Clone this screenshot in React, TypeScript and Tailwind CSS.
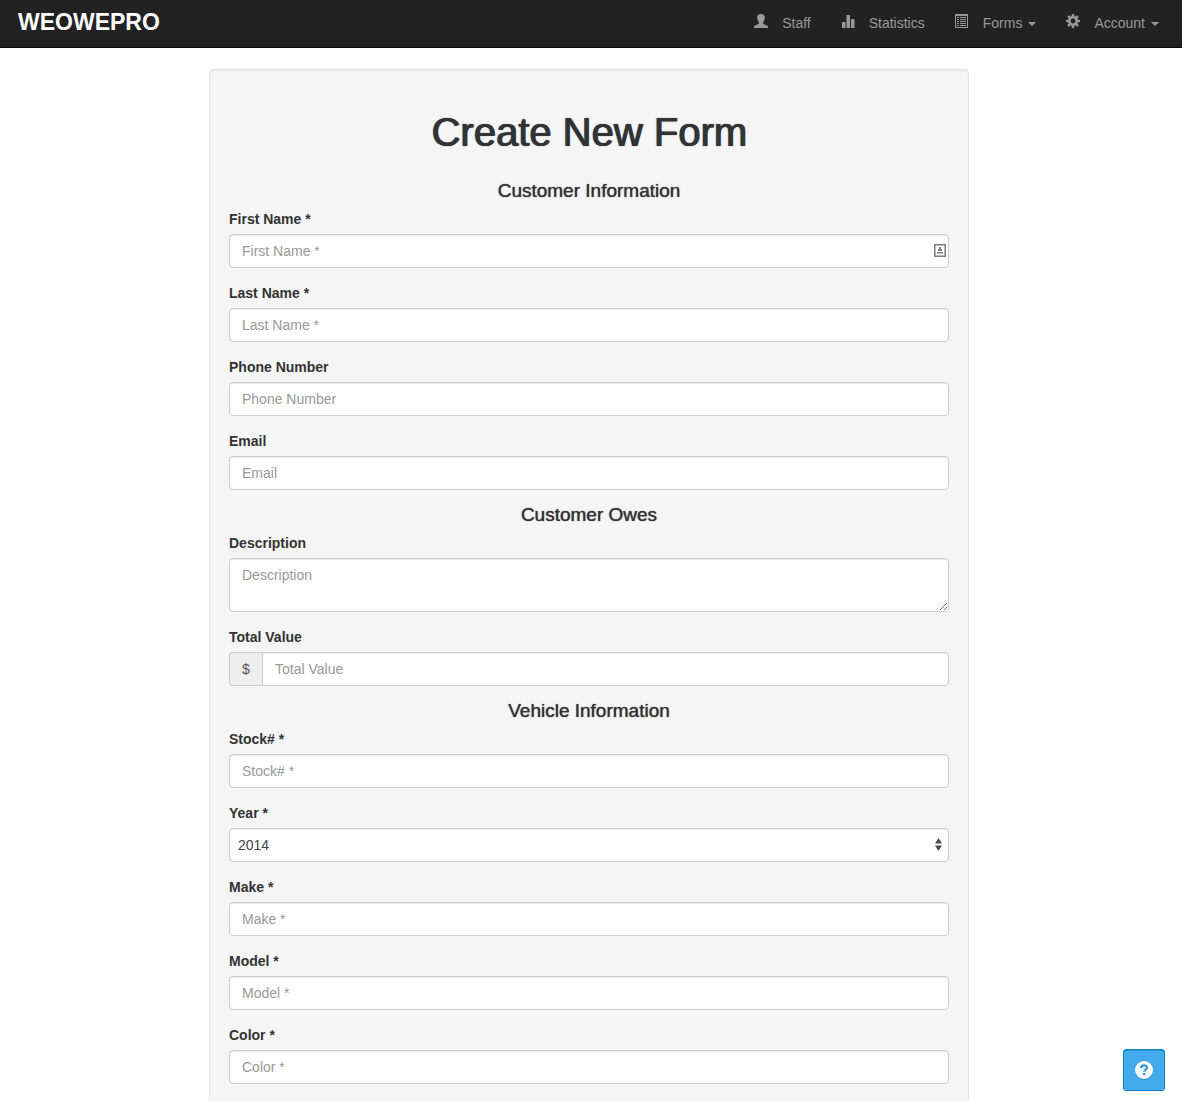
import { useId } from "react";
import type { ReactNode } from "react";

const control =
  "block w-full rounded border border-[#cccccc] bg-white px-3 text-sm leading-5 text-[#555555] shadow-[inset_0_1px_1px_rgba(0,0,0,0.075)] outline-none placeholder:text-[#999999] placeholder:opacity-100 focus:border-[#66afe9]";

function UserIcon() {
  return (
    <svg viewBox="0 0 14 14" className="size-3.5" fill="currentColor" aria-hidden="true">
      <path d="M7 0C4.500 0 3.200 1.400 3.200 3.500c0 .8.200 1 .1 1.500-.1.500.1 1.100.5 1.300.2.900.6 1.600 1.100 2.100v1.200c-.2.500-.8.700-1.500 1C1.700 11.200.3 11.800 0 12.600V14h14v-1.400c-.3-.8-1.700-1.400-3.400-2-.7-.3-1.300-.5-1.500-1V8.400c.5-.5.9-1.200 1.100-2.100.4-.2.600-.8.5-1.300-.1-.5.100-.7.100-1.500C10.800 1.400 9.500 0 7 0z" />
    </svg>
  );
}

function StatsIcon() {
  return (
    <svg viewBox="0 0 14 14" className="size-3.5" fill="currentColor" aria-hidden="true">
      <rect x="1" y="8" width="3.500" height="6" rx=".5" />
      <rect x="5.500" y="1" width="3.500" height="13" rx=".5" />
      <rect x="10" y="5" width="3.500" height="9" rx=".5" />
    </svg>
  );
}

function ListIcon() {
  return (
    <svg viewBox="0 0 14 14" className="size-3.5" aria-hidden="true">
      <path fill="currentColor" fillRule="evenodd" d="M0 0h13v14H0zM1 2v11h11V2z" />
      <path fill="currentColor" d="M2 3h2v1H2zM5 3h6v1H5zM2 5h2v1H2zM5 5h6v1H5zM2 7h2v1H2zM5 7h6v1H5zM2 9h2v1H2zM5 9h6v1H5zM2 11h2v1H2zM5 11h6v1H5z" />
    </svg>
  );
}

function GearIcon() {
  return (
    <svg viewBox="0 0 14 14" className="size-3.5" aria-hidden="true">
      <g fill="currentColor">
        <rect x="5.700" y="0" width="2.600" height="14" rx=".5" />
        <rect x="5.700" y="0" width="2.600" height="14" rx=".5" transform="rotate(45 7 7)" />
        <rect x="5.700" y="0" width="2.600" height="14" rx=".5" transform="rotate(90 7 7)" />
        <rect x="5.700" y="0" width="2.600" height="14" rx=".5" transform="rotate(135 7 7)" />
        <circle cx="7" cy="7" r="5" />
      </g>
      <circle cx="7" cy="7" r="2.400" fill="#222222" />
    </svg>
  );
}

function Caret() {
  return (
    <svg viewBox="0 0 8 4" className="mt-px ml-1.5 h-1 w-2" fill="currentColor" aria-hidden="true">
      <path d="M0 0h8L4 4z" />
    </svg>
  );
}

const navItem = "flex items-center text-sm leading-5 text-[#999999] hover:text-white";

function NavLabel({ icon, children }: { icon: ReactNode; children: ReactNode }) {
  return (
    <>
      <span className="mr-3.5 pb-1">{icon}</span>
      {children}
    </>
  );
}

function SectionTitle({ children }: { children: ReactNode }) {
  return (
    <h2 className="mb-2 text-center text-[19px] leading-5 text-[#333333] [text-shadow:0_0_1px_#333333]">
      {children}
    </h2>
  );
}

function Field({ label, children }: { label: string; children: (id: string) => ReactNode }) {
  const id = useId();
  return (
    <div className="mb-[15px] last:mb-0">
      <label htmlFor={id} className="mb-[5px] block w-fit text-sm leading-5 font-bold text-[#333333]">
        {label}
      </label>
      {children(id)}
    </div>
  );
}

function TextField({ label, type = "text" }: { label: string; type?: string }) {
  return (
    <Field label={label}>
      {(id) => <input id={id} type={type} placeholder={label} className={`${control} h-[34px]`} />}
    </Field>
  );
}

export default function App() {
  return (
    <div className="flex min-h-screen flex-col bg-white font-['Liberation_Sans',Arial,sans-serif]">
      <header className="flex h-12 items-center justify-between border-b border-[#080808] bg-[#222222] pr-[23px] pl-[18px]">
        <a href="#" className="pb-1 text-[23px] leading-6 font-bold text-white">
          WEOWEPRO
        </a>
        <nav className="flex items-center gap-[30px] pb-px">
          <a href="#staff" className={navItem}>
            <NavLabel icon={<UserIcon />}>Staff</NavLabel>
          </a>
          <a href="#statistics" className={navItem}>
            <NavLabel icon={<StatsIcon />}>Statistics</NavLabel>
          </a>
          <button type="button" aria-haspopup="menu" className={navItem}>
            <NavLabel icon={<ListIcon />}>Forms</NavLabel>
            <Caret />
          </button>
          <button type="button" aria-haspopup="menu" className={navItem}>
            <NavLabel icon={<GearIcon />}>Account</NavLabel>
            <Caret />
          </button>
        </nav>
      </header>

      <main className="flex flex-1 justify-center pt-[21px] pr-1">
        <form className="w-full max-w-[760px] rounded-t border border-b-0 border-[#e3e3e3] bg-[#f5f5f5] px-[19px] pt-[38px] pb-[17px] shadow-[inset_0_1px_1px_rgba(0,0,0,0.05)]">
          <h1 className="mb-[25px] text-center text-[40px] leading-12 text-[#333333] [text-shadow:1px_0_0_#333333,0_0_1px_#333333]">
            Create New Form
          </h1>

          <SectionTitle>Customer Information</SectionTitle>
          <Field label="First Name *">
            {(id) => (
              <div className="relative">
                <input id={id} type="text" placeholder="First Name *" className={`${control} h-[34px]`} />
                <svg viewBox="0 0 12 13" className="pointer-events-none absolute top-[10px] right-[3px] h-[13px] w-3" aria-hidden="true">
                  <path fill="none" stroke="#7d7d7d" strokeWidth="1.500" d="M.75.750h10.500v11.500H.75z" />
                  <path fill="#7d7d7d" d="M5 3h2v2H5zM4 5h4v2H4zM3 8h6v1H3z" />
                  <path fill="#b5b5b5" d="M3 9h6v1H3z" />
                </svg>
              </div>
            )}
          </Field>
          <TextField label="Last Name *" />
          <TextField label="Phone Number" type="tel" />
          <TextField label="Email" type="email" />

          <SectionTitle>Customer Owes</SectionTitle>
          <Field label="Description">
            {(id) => <textarea id={id} placeholder="Description" className={`${control} h-[54px] resize-y py-1.5`} />}
          </Field>
          <Field label="Total Value">
            {(id) => (
              <div className="flex">
                <span className="flex w-[33px] items-center justify-center rounded-l border border-r-0 border-[#cccccc] bg-[#eeeeee] text-sm text-[#555555]">
                  $
                </span>
                <input id={id} type="text" placeholder="Total Value" className={`${control} h-[34px] flex-1 rounded-l-none`} />
              </div>
            )}
          </Field>

          <SectionTitle>Vehicle Information</SectionTitle>
          <TextField label="Stock# *" />
          <Field label="Year *">
            {(id) => (
              <div className="relative">
                <select
                  id={id}
                  defaultValue="2014"
                  className="block h-[34px] w-full appearance-none rounded border border-[#cccccc] bg-white pr-6 pl-2 text-sm leading-5 text-[#444444] shadow-[inset_0_1px_1px_rgba(0,0,0,0.075)] outline-none"
                >
                  <option>2015</option>
                  <option>2014</option>
                  <option>2013</option>
                  <option>2012</option>
                </select>
                <svg viewBox="0 0 7 13" className="pointer-events-none absolute top-[10px] right-[7px] h-[13px] w-[7px]" fill="#4d4d4d" aria-hidden="true">
                  <path d="M3.500 0L7 5.500H0zM3.500 13L7 7.500H0z" />
                </svg>
              </div>
            )}
          </Field>
          <TextField label="Make *" />
          <TextField label="Model *" />
          <TextField label="Color *" />
        </form>
      </main>

      <button
        type="button"
        aria-label="Help"
        className="fixed right-[17px] bottom-[10px] flex size-[42px] items-center justify-center rounded-[3px] border border-[#1082c8] bg-[#42aaed] shadow-[inset_0_1px_0_rgba(0,90,160,0.3)]"
      >
        <svg viewBox="0 0 20 20" className="size-5" aria-hidden="true">
          <circle cx="10" cy="11" r="9" fill="#1c6fa8" opacity=".5" />
          <circle cx="10" cy="10" r="9" fill="#ffffff" />
          <path fill="none" stroke="#3596d6" strokeWidth="2.200" d="M7 8c.1-1.700 1.300-2.700 3-2.700s3 1 3 2.400c0 1.900-2.800 1.900-2.800 4.100" />
          <rect x="9" y="13" width="2.300" height="2.200" fill="#3596d6" />
        </svg>
      </button>
    </div>
  );
}
